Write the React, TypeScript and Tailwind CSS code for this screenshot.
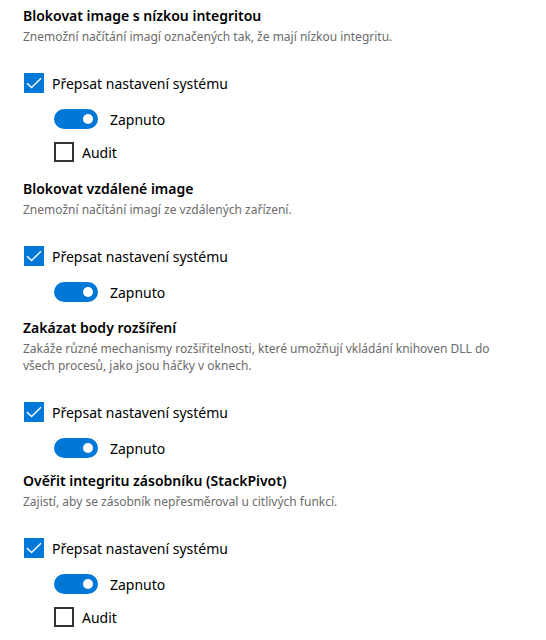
import { useState } from 'react'

type Setting = {
  title: string
  description: string
  audit: boolean
  offset?: string
}

const settings: Setting[] = [
  {
    title: 'Blokovat image s nízkou integritou',
    description: 'Znemožní načítání imagí označených tak, že mají nízkou integritu.',
    audit: true,
  },
  {
    title: 'Blokovat vzdálené image',
    description: 'Znemožní načítání imagí ze vzdálených zařízení.',
    audit: false,
  },
  {
    title: 'Zakázat body rozšíření',
    description:
      'Zakáže různé mechanismy rozšiřitelnosti, které umožňují vkládání knihoven DLL do všech procesů, jako jsou háčky v oknech.',
    audit: false,
  },
  {
    title: 'Ověřit integritu zásobníku (StackPivot)',
    description: 'Zajistí, aby se zásobník nepřesměroval u citlivých funkcí.',
    audit: true,
    offset: '-mt-[3px]',
  },
]

function Checkbox({ checked, onChange }: { checked: boolean; onChange: () => void }) {
  return (
    <button
      onClick={onChange}
      className={
        checked
          ? 'w-5 h-5 shrink-0 bg-[#0078d7] flex items-center justify-center'
          : 'w-5 h-5 shrink-0 border-2 border-[#333333] bg-white'
      }
    >
      {checked && (
        <svg width="20" height="20" viewBox="0 0 20 20" fill="none">
          <path d="M3 10.2 L7.6 14.6 L17 5.2" stroke="white" strokeWidth="1.4" />
        </svg>
      )}
    </button>
  )
}

function Toggle({ on, onChange }: { on: boolean; onChange: () => void }) {
  return (
    <button
      onClick={onChange}
      className={
        on
          ? 'w-11 h-5 shrink-0 rounded-full bg-[#0078d7] flex items-center justify-end px-[5px]'
          : 'w-11 h-5 shrink-0 rounded-full border-2 border-[#333333] flex items-center justify-start px-[3px]'
      }
    >
      <span className={on ? 'w-2.5 h-2.5 rounded-full bg-white' : 'w-2.5 h-2.5 rounded-full bg-[#333333]'} />
    </button>
  )
}

function SettingBlock({ setting }: { setting: Setting }) {
  const [override, setOverride] = useState(true)
  const [enabled, setEnabled] = useState(true)
  const [audit, setAudit] = useState(false)

  return (
    <div className={`flex flex-col ${setting.offset ?? ''}`}>
      <h3 className="text-[14px] leading-[20px] font-semibold text-black">{setting.title}</h3>
      <p className="mt-[2px] text-[12px] leading-[17px] text-[#6b6b6b] pr-10">{setting.description}</p>

      <div className="mt-5 h-9 flex items-center gap-2 pl-[1px]">
        <Checkbox checked={override} onChange={() => setOverride(!override)} />
        <span className="text-[14px] text-black">Přepsat nastavení systému</span>
      </div>

      <div className="h-9 flex items-center gap-3 pl-[31px]">
        <Toggle on={enabled} onChange={() => setEnabled(!enabled)} />
        <span className="text-[14px] text-black">{enabled ? 'Zapnuto' : 'Vypnuto'}</span>
      </div>

      {setting.audit && (
        <div className="h-[30px] mb-1 flex items-center gap-2 pl-[31px]">
          <Checkbox checked={audit} onChange={() => setAudit(!audit)} />
          <span className="text-[14px] text-black">Audit</span>
        </div>
      )}
    </div>
  )
}

export default function App() {
  return (
    <div
      className="min-h-screen bg-white pl-[23px] pt-[6px] flex flex-col gap-2"
      style={{ fontFamily: '"Noto Sans", "Open Sans", sans-serif' }}
    >
      {settings.map((s) => (
        <SettingBlock key={s.title} setting={s} />
      ))}
    </div>
  )
}
